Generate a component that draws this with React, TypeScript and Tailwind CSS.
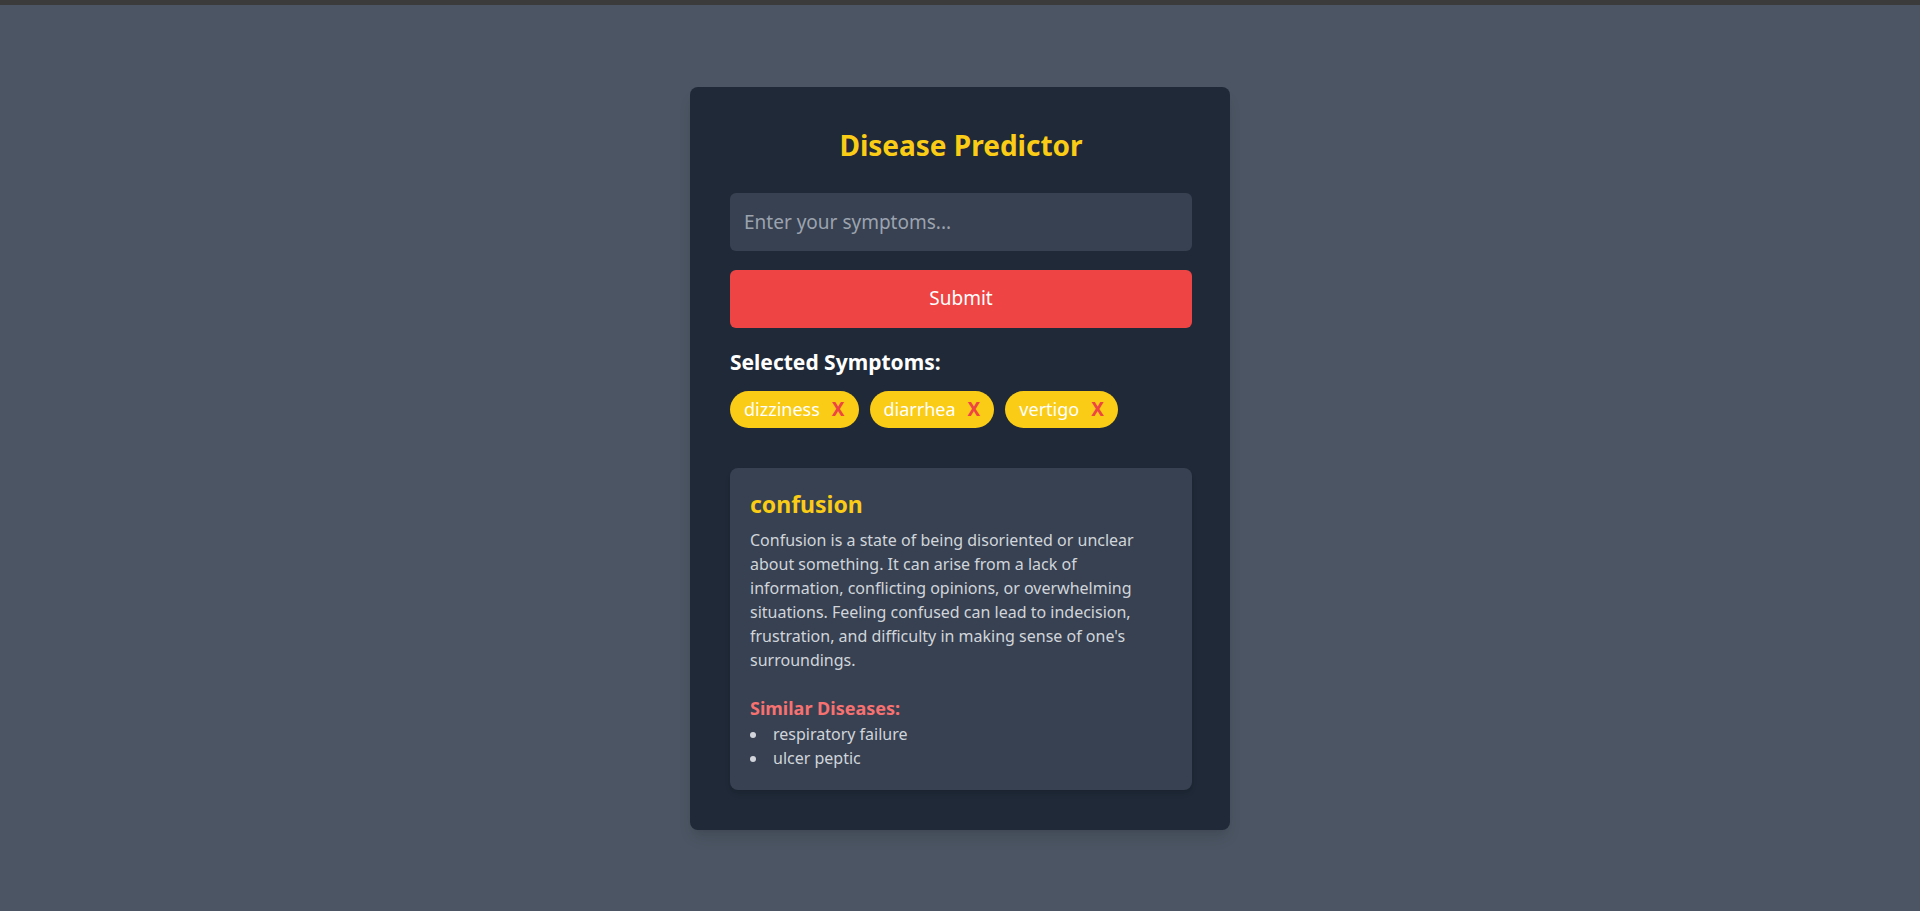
import { useState } from 'react'

const similar = ['respiratory failure', 'ulcer peptic']

export default function App() {
  const [symptoms, setSymptoms] = useState(['dizziness', 'diarrhea', 'vertigo'])
  const [value, setValue] = useState('')

  const remove = (s: string) => setSymptoms((list) => list.filter((x) => x !== s))

  return (
    <div className="min-h-screen flex flex-col bg-[#4b5563] font-['Noto_Sans',sans-serif]">
      {/* browser top strip */}
      <div className="h-[5px] bg-[#3b3b3b]" />

      <div className="flex-1 flex items-center justify-center">
        <div className="w-[540px] bg-[#1f2937] rounded-lg shadow-lg py-10 pl-10 pr-[38px] flex flex-col">
          <h1 className="text-[28px] leading-9 font-bold text-[#facc15] text-center mb-[30px]">
            Disease Predictor
          </h1>

          <input
            value={value}
            onChange={(e) => setValue(e.target.value)}
            placeholder="Enter your symptoms..."
            className="h-[58px] w-full bg-[#374151] rounded-md px-[14px] text-[19px] text-white placeholder:text-[#9ca3af] outline-none mb-[19px]"
          />

          <button className="h-[58px] w-full bg-[#ef4444] rounded-md text-[19px] text-white">
            Submit
          </button>

          <h2 className="mt-5 text-[21px] leading-7 font-bold text-white mb-[15px]">
            Selected Symptoms:
          </h2>

          <div className="flex flex-wrap gap-[11px]">
            {symptoms.map((s) => (
              <span
                key={s}
                className="h-[37px] flex items-center rounded-full bg-[#facc15] px-[14px] text-[18px] text-white"
              >
                {s}
                <button onClick={() => remove(s)} className="ml-3 font-bold text-[19px] text-[#ef4444]">
                  X
                </button>
              </span>
            ))}
          </div>

          {/* 결과 박스 */}
          <div className="mt-10 bg-[#374151] rounded-lg shadow-md p-5">
            <h3 className="text-[23px] leading-8 font-bold text-[#facc15] mb-2">confusion</h3>
            <p className="text-base leading-6 text-[#d1d5db] whitespace-nowrap">
              Confusion is a state of being disoriented or unclear
              <br />
              about something. It can arise from a lack of
              <br />
              information, conflicting opinions, or overwhelming
              <br />
              situations. Feeling confused can lead to indecision,
              <br />
              frustration, and difficulty in making sense of one's
              <br />
              surroundings.
            </p>
            <h4 className="mt-[22px] text-[18px] leading-7 font-bold text-[#f87171]">Similar Diseases:</h4>
            <ul className="list-disc list-inside text-base leading-6 text-[#d1d5db]">
              {similar.map((d) => (
                <li key={d}>{d}</li>
              ))}
            </ul>
          </div>
        </div>
      </div>
    </div>
  )
}
